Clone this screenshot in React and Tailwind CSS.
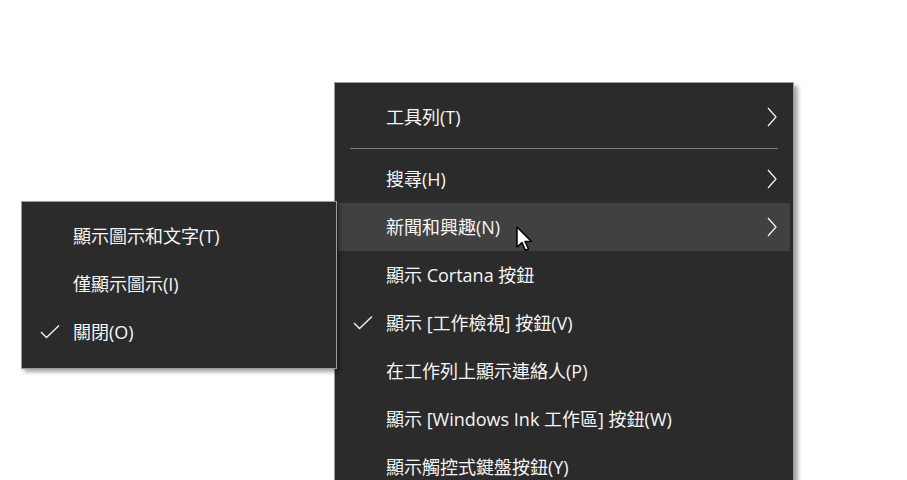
const font = {
  fontFamily: '"Segoe UI", "Open Sans", "Noto Sans CJK TC", sans-serif',
};

function Chevron() {
  return (
    <svg width="12" height="22" viewBox="0 0 12 22" className="shrink-0">
      <polyline points="2,2 10,11 2,20" fill="none" stroke="#f2f2f2" strokeWidth="1.3" />
    </svg>
  );
}

function Check() {
  return (
    <svg width="22" height="16" viewBox="0 0 22 16">
      <polyline points="2,8 7.5,13.5 20,1.5" fill="none" stroke="#f2f2f2" strokeWidth="1.4" />
    </svg>
  );
}

function Cursor() {
  return (
    <svg width="20" height="28" viewBox="0 0 20 28" className="absolute left-[516px] top-[226px]">
      <path
        d="M1 1 L1 21 L6 16.5 L9.5 24.5 L12.5 23 L9 15.5 L15.5 15.5 Z"
        fill="#ffffff"
        stroke="#000000"
        strokeWidth="1.5"
        strokeLinejoin="round"
      />
    </svg>
  );
}

function Item({ label, sub, checked, active }) {
  return (
    <div className={`flex h-12 items-center pr-[12px] ${active ? "bg-[#414141]" : ""}`}>
      <div className="flex w-[48px] shrink-0 justify-center pl-[2px]">
        {checked && <Check />}
      </div>
      <span className="flex-1 text-[18px] leading-none text-[#f5f5f5]">{label}</span>
      {sub && <Chevron />}
    </div>
  );
}

export default function App() {
  return (
    <div className="relative h-[480px] w-[907px] overflow-hidden bg-white" style={font}>
      {/* main context menu, runs past the bottom of the window */}
      <div className="absolute left-[334px] top-[82px] w-[460px] border border-[#9c9c9c] bg-[#2b2b2b] px-[3px] pt-[10px] pb-2 shadow-[4px_4px_4px_rgba(0,0,0,0.35)]">
        <Item label="工具列(T)" sub />
        <div className="flex h-[14px] items-center px-[12px]">
          <div className="h-px w-full bg-[#7d7d7d]" />
        </div>
        <Item label="搜尋(H)" sub />
        <Item label="新聞和興趣(N)" sub active />
        <Item label="顯示 Cortana 按鈕" />
        <Item label="顯示 [工作檢視] 按鈕(V)" checked />
        <Item label="在工作列上顯示連絡人(P)" />
        <Item label="顯示 [Windows Ink 工作區] 按鈕(W)" />
        <Item label="顯示觸控式鍵盤按鈕(Y)" />
      </div>

      {/* news & interests submenu */}
      <div className="absolute left-[21px] top-[201px] w-[316px] border border-[#9c9c9c] bg-[#2b2b2b] px-[3px] pt-[10px] pb-[12px] shadow-[3px_3px_4px_rgba(0,0,0,0.35)]">
        <Item label="顯示圖示和文字(T)" />
        <Item label="僅顯示圖示(I)" />
        <Item label="關閉(O)" checked />
      </div>

      <Cursor />
    </div>
  );
}
